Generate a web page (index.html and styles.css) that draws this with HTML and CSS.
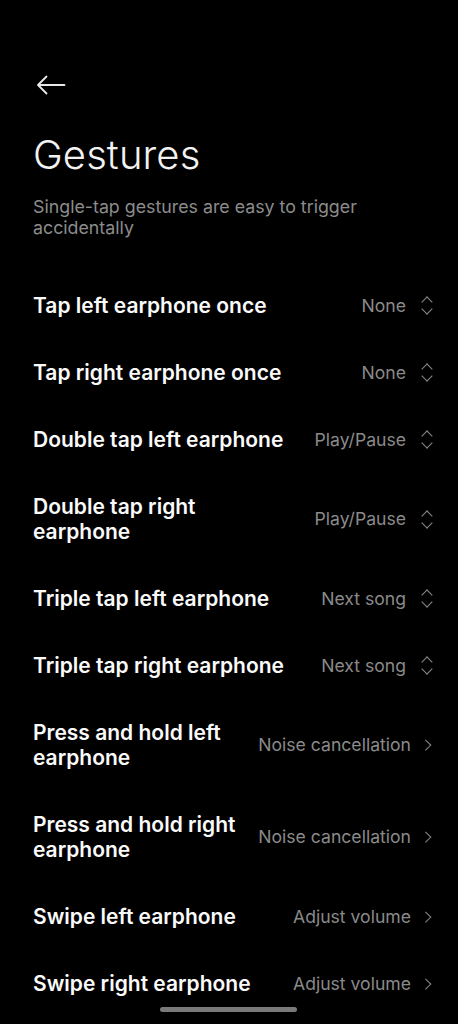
FILE: index.html
```html
<!DOCTYPE html>
<html>
<head>
<meta charset="utf-8">
<link rel="stylesheet" href="styles.css">
</head>
<body>
<div class="page">
  <div class="topbar">
    <svg class="back" width="30" height="20" viewBox="0 0 30 20"><path d="M28.5 10H2M10.5 1.5L2 10l8.5 8.5" fill="none" stroke="#e8e8e8" stroke-width="1.8" stroke-linecap="round" stroke-linejoin="round"/></svg>
  </div>
  <h1 class="title">Gestures</h1>
  <p class="subtitle">Single-tap gestures are easy to trigger accidentally</p>
  <div class="list">
    <div class="row"><div class="label">Tap left earphone once</div><div class="value">None</div><span class="icon updown"></span></div>
    <div class="row"><div class="label">Tap right earphone once</div><div class="value">None</div><span class="icon updown"></span></div>
    <div class="row"><div class="label">Double tap left earphone</div><div class="value">Play/Pause</div><span class="icon updown"></span></div>
    <div class="row two"><div class="label">Double tap right<br>earphone</div><div class="value">Play/Pause</div><span class="icon updown"></span></div>
    <div class="row"><div class="label">Triple tap left earphone</div><div class="value">Next song</div><span class="icon updown"></span></div>
    <div class="row"><div class="label">Triple tap right earphone</div><div class="value">Next song</div><span class="icon updown"></span></div>
    <div class="row two"><div class="label">Press and hold left<br>earphone</div><div class="value">Noise cancellation</div><span class="icon chev"></span></div>
    <div class="row two"><div class="label">Press and hold right<br>earphone</div><div class="value">Noise cancellation</div><span class="icon chev"></span></div>
    <div class="row"><div class="label">Swipe left earphone</div><div class="value">Adjust volume</div><span class="icon chev"></span></div>
    <div class="row"><div class="label">Swipe right earphone</div><div class="value">Adjust volume</div><span class="icon chev"></span></div>
  </div>
  <div class="home"></div>
</div>
</body>
</html>
```
FILE: styles.css
```css
* { box-sizing: border-box; }
html, body { margin: 0; padding: 0; background: #000; }
body { font-family: Inter, "Noto Sans", sans-serif; color: #fff; }
.page { width: 458px; height: 1024px; position: relative; overflow: hidden; padding: 75px 25px 0 33px; }
.topbar { height: 20px; display: flex; align-items: center; }
.back { display: block; margin-left: 3px; }
.title { margin: 34px 0 0; font-size: 40px; font-weight: 300; line-height: 52px; color: #f2f2f2; letter-spacing: 0.1px; }
.subtitle { margin: 14.5px 0 0; font-size: 17.8px; line-height: 21px; color: #8c8c8c; font-weight: 400; width: 380px; }
.list { margin-top: 34px; }
.row { display: flex; align-items: center; height: 67px; }
.row.two { height: 92px; }
.label { flex: 1; font-size: 21px; font-weight: 600; line-height: 25px; color: #fafafa; }
.value { font-size: 17.6px; color: #8a8a8a; margin-left: 10px; white-space: nowrap; }
.icon { height: 20px; flex: none; position: relative; }
.updown { margin-left: 14px; width: 13px; }
.updown::before, .updown::after { content: ""; position: absolute; left: 2.5px; width: 7px; height: 7px; border-left: 1.8px solid #8a8a8a; border-top: 1.8px solid #8a8a8a; }
.updown::before { top: 3px; transform: rotate(45deg); }
.updown::after { top: 10px; transform: rotate(-135deg); }
.chev { margin-left: 12px; width: 10px; }
.chev::before { content: ""; position: absolute; left: -1px; top: 6.5px; width: 6.5px; height: 6.5px; border-right: 1.8px solid #8a8a8a; border-top: 1.8px solid #8a8a8a; transform: rotate(45deg); }
.home { position: absolute; left: 160px; top: 1007px; width: 137px; height: 5px; border-radius: 3px; background: #7a7a7a; }
```
